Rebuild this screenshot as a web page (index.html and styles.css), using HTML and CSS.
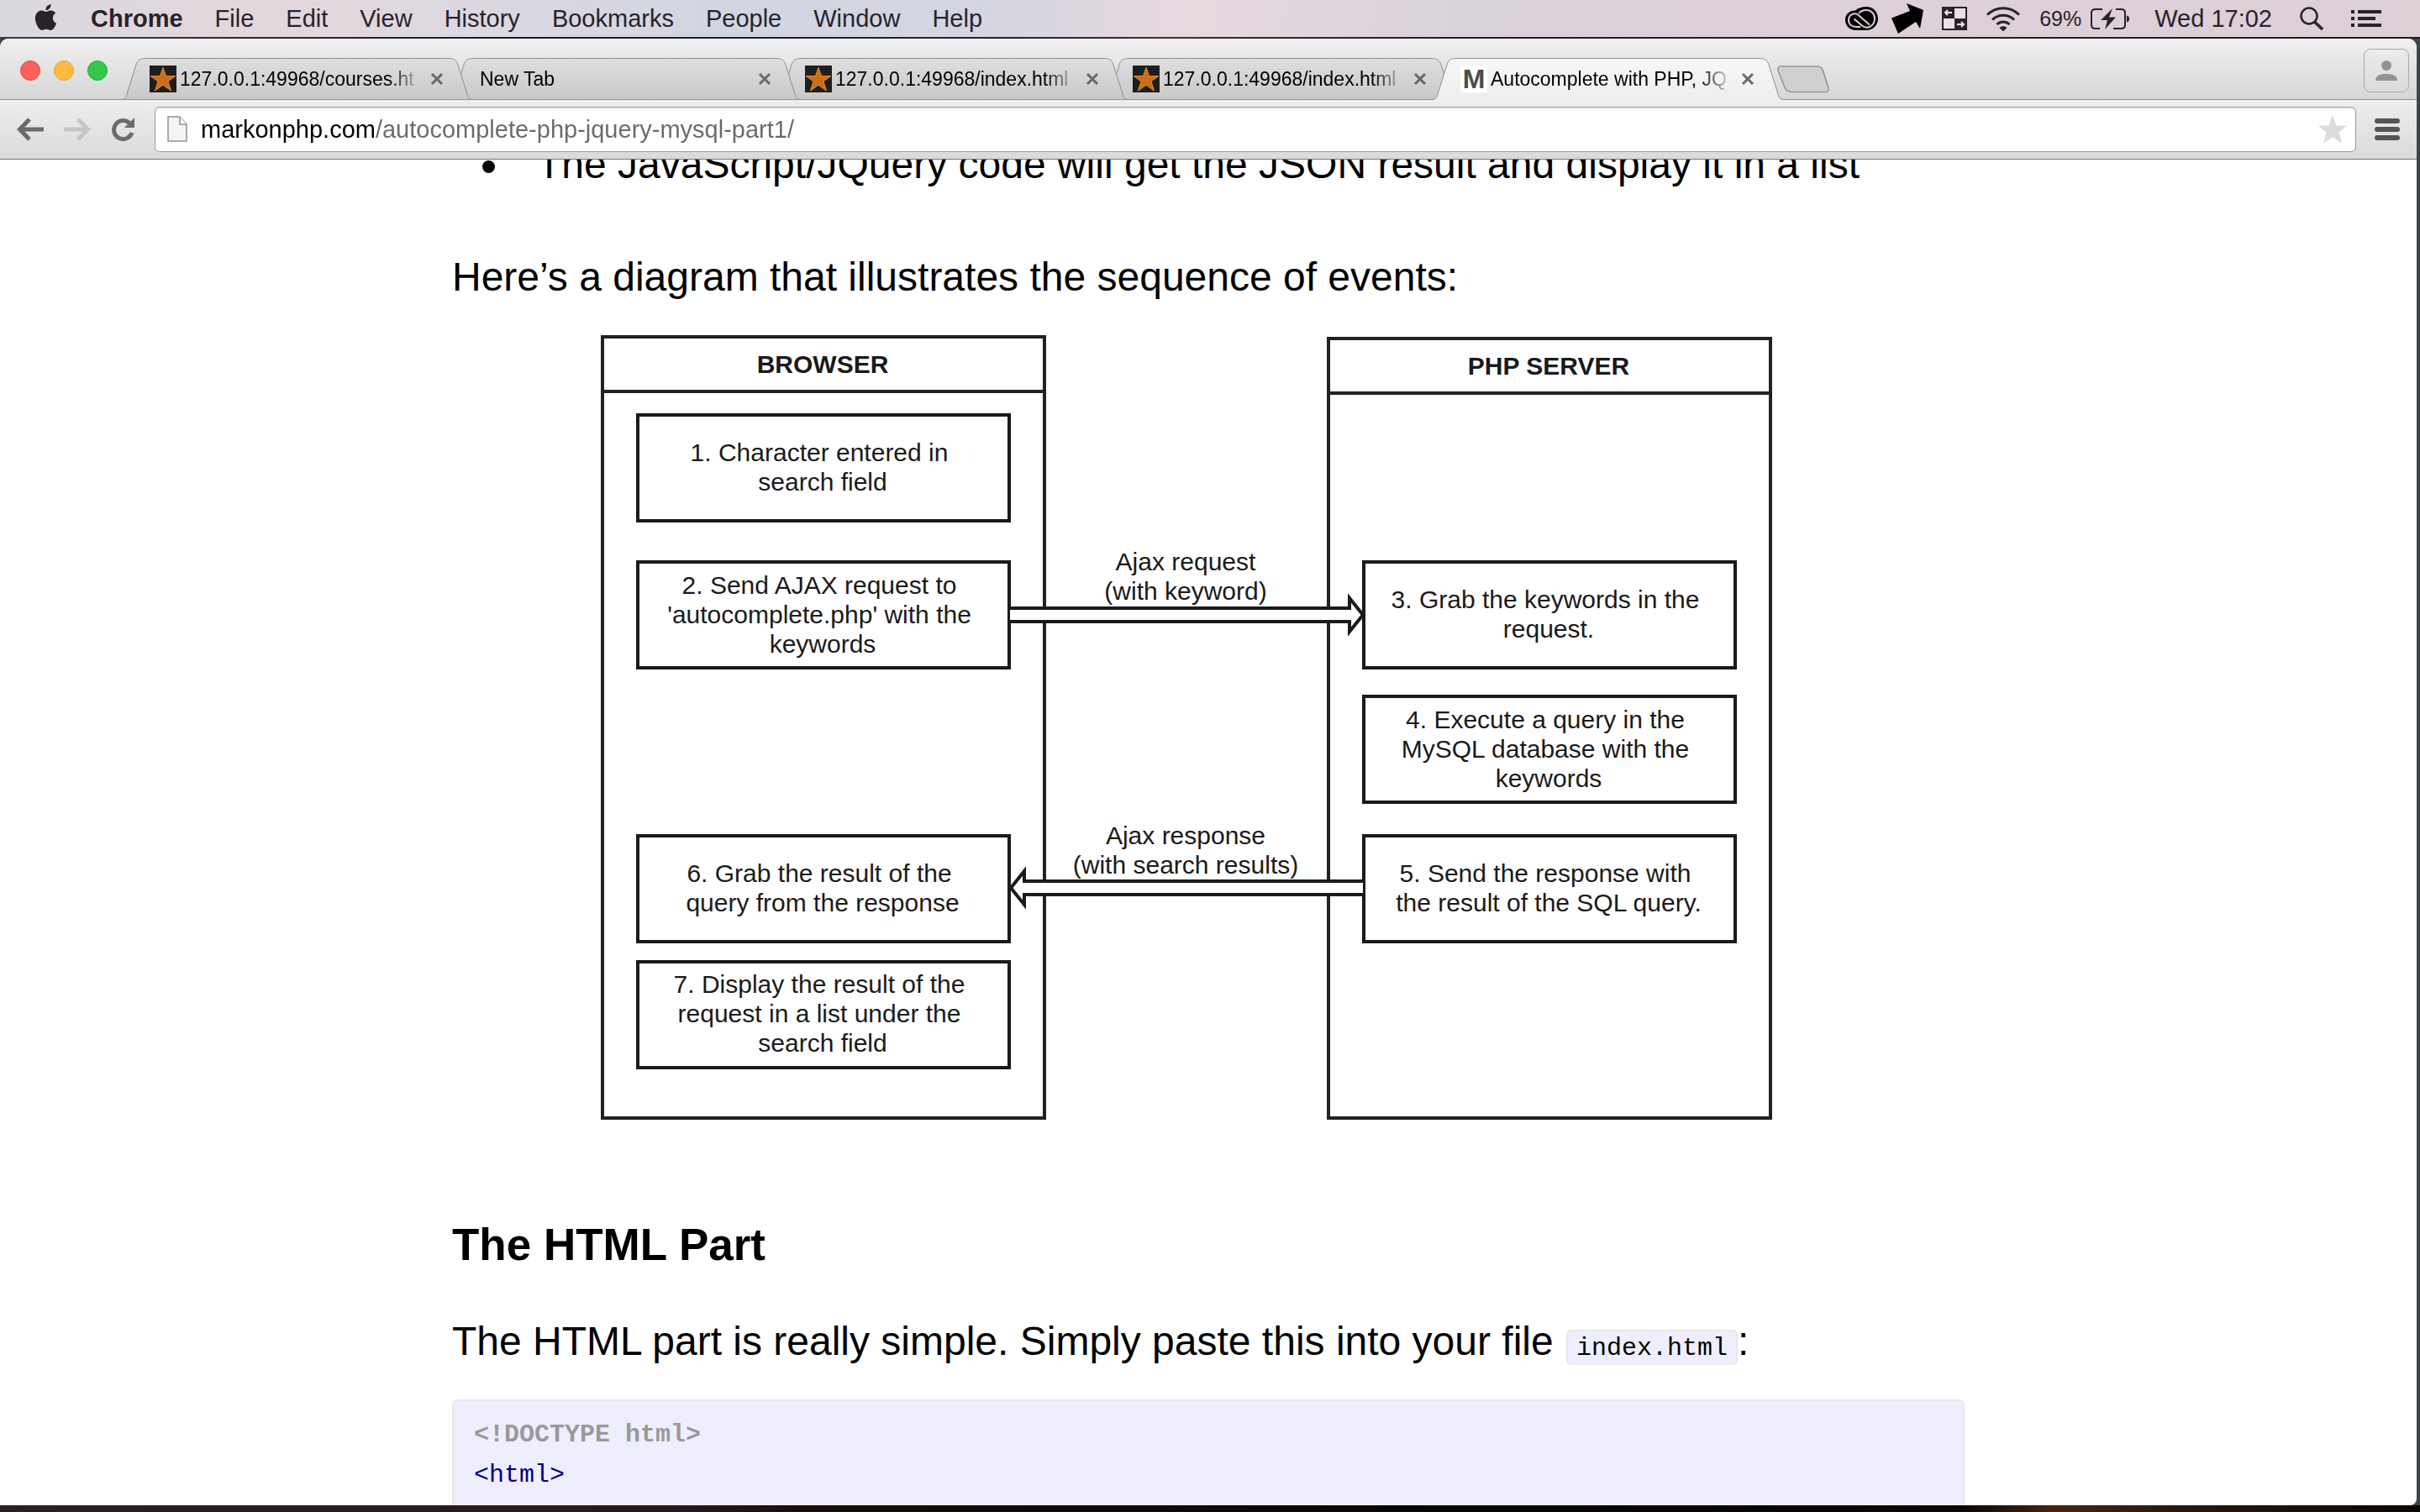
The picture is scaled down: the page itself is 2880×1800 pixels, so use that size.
FILE: index.html
```html
<!DOCTYPE html>
<html lang="en">
<head>
<meta charset="utf-8">
<title>Autocomplete with PHP, JQuery and MySQL</title>
<link rel="stylesheet" href="styles.css">
</head>
<body>
<svg class="defs" width="0" height="0" aria-hidden="true">
  <defs>
    <linearGradient id="tab-idle" x1="0" y1="0" x2="0" y2="1"><stop offset="0" stop-color="#dedede"/><stop offset="1" stop-color="#c9c9c9"/></linearGradient>
    <linearGradient id="tab-active" x1="0" y1="0" x2="0" y2="1"><stop offset="0" stop-color="#f7f7f7"/><stop offset="1" stop-color="#eeeeee"/></linearGradient>
    <symbol id="shape" viewBox="0 0 419 50"><path d="M1 49.500C5 49 6 47 7 43L18 8C20 2 23 .5 30 .5H389C396 .5 399 2 401 8L412 43C413 47 414 49 418 49.500Z" fill="url(#tab-idle)" stroke="#8f8f8f"/></symbol>
    <symbol id="shape-active" viewBox="0 0 419 50"><path d="M0 50C5 49 6 47 7 43L18 8C20 2 23 .5 30 .5H389C396 .5 399 2 401 8L412 43C413 47 414 49 419 50Z" fill="url(#tab-active)"/><path d="M0 49.500C5 49 6 47 7 43L18 8C20 2 23 .5 30 .5H389C396 .5 399 2 401 8L412 43C413 47 414 49 419 49.500" fill="none" stroke="#8f8f8f"/></symbol>
    <symbol id="favicon" viewBox="0 0 32 32"><path d="M0 0H32V32H0Z" fill="#1e1e1e"/><path d="M16 2.500L19.600 12.500H31L22 18.800L25.500 30L16 23.200L6.500 30L10 18.800L1 12.500H12.400Z" fill="#c96f1c" stroke="#e58a26" stroke-width="1"/></symbol>
    <symbol id="close" viewBox="0 0 16 16"><path d="M2 2L14 14M14 2L2 14" stroke="#686868" stroke-width="3" fill="none"/></symbol>
  </defs>
</svg>

<header class="menubar">
  <nav class="menus" aria-label="Menu bar">
    <button class="menu" aria-label="Apple menu"><svg class="apple" width="31" height="31" viewBox="0 0 24 24"><path fill="currentColor" d="M12.152 6.896c-.948 0-2.415-1.078-3.960-1.040-2.040.027-3.910 1.183-4.961 3.014-2.117 3.675-.546 9.103 1.519 12.090 1.013 1.454 2.208 3.090 3.792 3.039 1.520-.065 2.090-.987 3.935-.987 1.831 0 2.350.987 3.960.948 1.637-.026 2.676-1.480 3.676-2.948 1.156-1.688 1.636-3.325 1.662-3.415-.039-.013-3.182-1.221-3.220-4.857-.026-3.040 2.480-4.494 2.597-4.559-1.429-2.090-3.623-2.324-4.390-2.376-2-.156-3.675 1.090-4.610 1.090zM15.530 3.830c.843-1.012 1.400-2.427 1.245-3.830-1.207.052-2.662.805-3.532 1.818-.780.896-1.454 2.338-1.273 3.714 1.338.104 2.715-.688 3.559-1.701"/></svg></button>
    <button class="menu app-name">Chrome</button>
    <button class="menu">File</button>
    <button class="menu">Edit</button>
    <button class="menu">View</button>
    <button class="menu">History</button>
    <button class="menu">Bookmarks</button>
    <button class="menu">People</button>
    <button class="menu">Window</button>
    <button class="menu">Help</button>
  </nav>
  <div class="extras">
    <div class="status">
      <svg width="39" height="28" viewBox="0 0 39 28"><path d="M12 4.500C15 1.500 20 0 25 0C33 0 39 6 39 14C39 22 33 28 25 28H13C5 28 0 22.500 0 15.500C0 9 5 4.500 12 4.500Z" fill="#000"/><g fill="none" stroke="#ddd0d8" stroke-width="2"><path d="M29 21.500L15 9.500C11 6.500 4 9.500 4 15.500C4 21 8 24 13 24H18"/><path d="M10.500 14.500L20 22.500C27 28 35 22 35 14C35 8 30.500 4 25 4C21 4 18 5.500 16 8"/></g></svg>
      <svg width="38" height="36" viewBox="0 0 38 36"><path d="M0 17.500L22 9L18 0L38 8L34 30L29 22L8 36Z" fill="#000"/></svg>
    </div>
    <svg width="30" height="28" viewBox="0 0 30 28"><path d="M1 1H29V27H1Z" fill="#e9dfe6" stroke="currentColor" stroke-width="2"/><path d="M0 0H15V14H0ZM15 14H30V28H15Z" fill="currentColor"/><path d="M4 7H12M7 4L4 7L7 10M18 21H26M23 18L26 21L23 24" fill="none" stroke="#eee4ea" stroke-width="2"/></svg>
    <svg width="42" height="29" viewBox="0 0 42 29"><g fill="none" stroke="currentColor" stroke-width="3"><path d="M2 9.500C13-1 29-1 40 9.500"/><path d="M8 15.500C15 8.500 27 8.500 34 15.500"/><path d="M13.500 21C18 17 24 17 28.500 21"/></g><path d="M16.500 25C19 22.700 23 22.700 25.500 25L21 29.500Z" fill="currentColor"/></svg>
    <div class="battery">
      <span>69%</span>
      <svg width="46" height="25" viewBox="0 0 46 25"><path d="M14 1H6Q1 1 1 5V20Q1 24 6 24H11M27 24H36Q41 24 41 20V5Q41 1 36 1H30" fill="none" stroke="currentColor" stroke-width="2"/><path d="M43 8.500Q46 9 46 12.500T43 16.500Z" fill="currentColor"/><path d="M26 0L12 14H20L17 25L30 10.500H22Z" fill="currentColor"/></svg>
    </div>
    <div class="right-set">
      <time>Wed 17:02</time>
      <button class="menu" aria-label="Spotlight"><svg width="28" height="28" viewBox="0 0 28 28"><circle cx="11" cy="11" r="9.500" fill="none" stroke="currentColor" stroke-width="2.500"/><path d="M17.500 18L27 27" stroke="currentColor" stroke-width="3.500"/></svg></button>
      <button class="menu" aria-label="Notification Center"><svg width="36" height="20" viewBox="0 0 36 20"><path d="M0 2H4M8 2H36M0 10H4M8 10H29M0 18H4M8 18H36" stroke="currentColor" stroke-width="4"/></svg></button>
    </div>
  </div>
</header>

<div class="desktop">
  <div class="window">
    <div class="tabstrip">
      <div class="lights">
        <button class="light red" aria-label="Close window"></button>
        <button class="light yellow" aria-label="Minimise window"></button>
        <button class="light green" aria-label="Zoom window"></button>
      </div>
      <div class="tabs" role="tablist">
        <div class="tab t1" role="tab"><svg class="shape"><use href="#shape"/></svg><div class="tab-body"><svg class="fav"><use href="#favicon"/></svg><span class="title">127.0.0.1:49968/courses.ht</span><button class="close" aria-label="Close tab"><svg><use href="#close"/></svg></button></div></div>
        <div class="tab t2" role="tab"><svg class="shape"><use href="#shape"/></svg><div class="tab-body"><span class="title title-only">New Tab</span><button class="close" aria-label="Close tab"><svg><use href="#close"/></svg></button></div></div>
        <div class="tab t3" role="tab"><svg class="shape"><use href="#shape"/></svg><div class="tab-body"><svg class="fav"><use href="#favicon"/></svg><span class="title">127.0.0.1:49968/index.html</span><button class="close" aria-label="Close tab"><svg><use href="#close"/></svg></button></div></div>
        <div class="tab t4" role="tab"><svg class="shape"><use href="#shape"/></svg><div class="tab-body"><svg class="fav"><use href="#favicon"/></svg><span class="title">127.0.0.1:49968/index.html</span><button class="close" aria-label="Close tab"><svg><use href="#close"/></svg></button></div></div>
        <div class="tab active" role="tab" aria-selected="true"><svg class="shape"><use href="#shape-active"/></svg><div class="tab-body"><span class="fav mark">M</span><span class="title">Autocomplete with PHP, JQ</span><button class="close" aria-label="Close tab"><svg><use href="#close"/></svg></button></div></div>
      </div>
      <button class="new-tab" aria-label="New tab"><svg width="64" height="33" viewBox="0 0 64 33"><path d="M6 1H48Q54 1 55.500 6L62 27Q63 31.500 58 31.500H18Q12 31.500 10 26L2 6Q1 1 6 1Z" fill="#d0d0d0" stroke="#929292" stroke-width="1.500"/></svg></button>
      <button class="profile" aria-label="Profile"><svg width="26" height="24" viewBox="0 0 26 24"><circle cx="13" cy="6" r="6" fill="#929292"/><path d="M0 24C0 18 5 16 13 16S26 18 26 24Z" fill="#929292"/></svg></button>
    </div>

    <div class="toolbar">
      <div class="nav">
        <button class="tool" aria-label="Back"><svg width="32" height="28" viewBox="0 0 32 28"><path d="M15 2L3.500 14L15 26M4 14H32" fill="none" stroke="#6b6b6b" stroke-width="5"/></svg></button>
        <button class="tool" aria-label="Forward"><svg width="32" height="28" viewBox="0 0 32 28"><path d="M17 2L28.500 14L17 26M28 14H0" fill="none" stroke="#c6c6c6" stroke-width="5"/></svg></button>
        <button class="tool" aria-label="Reload"><svg width="30" height="28" viewBox="0 0 30 28"><path d="M23 7.500A11 11 0 1 0 25 18" fill="none" stroke="#6b6b6b" stroke-width="5"/><path d="M28 0V12H16Z" fill="#6b6b6b"/></svg></button>
      </div>
      <div class="omnibox">
        <svg width="24" height="32" viewBox="0 0 24 32"><path d="M1 1H15L23 10V30H1Z" fill="#f4f4f4" stroke="#919191" stroke-width="1.500"/><path d="M15 1V10H23" fill="#fff" stroke="#919191" stroke-width="1.500"/></svg>
        <input class="url" type="text" aria-label="Address" value="markonphp.com/autocomplete-php-jquery-mysql-part1/">
        <button class="tool" aria-label="Bookmark this page"><svg width="34" height="34" viewBox="0 0 34 34"><path d="M17 0L21.500 12.500H34L24.500 20.500L28 34L17 26L6 34L9.500 20.500L0 12.500H12.500Z" fill="#dcdcdc"/></svg></button>
      </div>
      <button class="tool" aria-label="Menu"><svg width="30" height="27" viewBox="0 0 30 27"><path d="M3 3H27M3 13H27M3 23H27" stroke="#555" stroke-width="6" stroke-linecap="round"/></svg></button>
    </div>

    <main class="page">
      <article class="post">
        <ul><li>The JavaScript/JQuery code will get the JSON result and display it in a list</li></ul>
        <p class="lead-in">Here’s a diagram that illustrates the sequence of events:</p>
        <figure>
          <svg class="diagram" viewBox="0 0 1500 936" role="img" aria-label="Sequence of events between the browser and the PHP server">
            <g fill="none" stroke="#222" stroke-width="4">
              <path d="M29 3H555V933H29ZM29 68H555"/>
              <path d="M893 5H1419V933H893ZM893 70H1419"/>
            </g>
            <g fill="#fff" stroke="#1a1a1a" stroke-width="4">
              <rect x="71" y="96" width="442" height="126"/>
              <rect x="71" y="271" width="442" height="126"/>
              <rect x="71" y="597" width="442" height="126"/>
              <rect x="71" y="747" width="442" height="126"/>
              <rect x="935" y="271" width="442" height="126"/>
              <rect x="935" y="431" width="442" height="126"/>
              <rect x="935" y="597" width="442" height="126"/>
              <path d="M514 326H918V314L934 334L918 354V342H514"/>
              <path d="M934 651H531V639L515 659L531 679V667H934"/>
            </g>
            <g class="caption heading"><text x="291" y="46">BROWSER</text><text x="1155" y="48">PHP SERVER</text></g>
            <g class="caption">
              <text x="287" y="151">1. Character entered in</text><text x="291" y="186">search field</text>
              <text x="287" y="309">2. Send AJAX request to</text><text x="287" y="344">'autocomplete.php' with the</text><text x="291" y="379">keywords</text>
              <text x="723" y="281">Ajax request</text><text x="723" y="316">(with keyword)</text>
              <text x="1151" y="326">3. Grab the keywords in the</text><text x="1155" y="361">request.</text>
              <text x="1151" y="469">4. Execute a query in the</text><text x="1151" y="504">MySQL database with the</text><text x="1155" y="539">keywords</text>
              <text x="723" y="607">Ajax response</text><text x="723" y="642">(with search results)</text>
              <text x="1151" y="652">5. Send the response with</text><text x="1155" y="687">the result of the SQL query.</text>
              <text x="287" y="652">6. Grab the result of the</text><text x="291" y="687">query from the response</text>
              <text x="287" y="784">7. Display the result of the</text><text x="287" y="819">request in a list under the</text><text x="291" y="854">search field</text>
            </g>
          </svg>
        </figure>
        <h2>The HTML Part</h2>
        <p>The HTML part is really simple. Simply paste this into your file <code>index.html</code>:</p>
        <pre><span class="doctype">&lt;!DOCTYPE html&gt;</span>
<span class="tag">&lt;html&gt;</span>
</pre>
      </article>
    </main>
  </div>
</div>
</body>
</html>
```
FILE: styles.css
```css
* { box-sizing: border-box; }

body {
  margin: 0;
  height: 100vh;
  display: flex;
  flex-direction: column;
  overflow: hidden;
  font-family: "Liberation Sans", Arial, sans-serif;
  color: #000;
}

button {
  margin: 0;
  padding: 0;
  border: 0;
  background: none;
  font: inherit;
  color: inherit;
}

svg { display: block; flex: none; }
.defs { position: absolute; }

/* Menu bar */
.menubar {
  flex: none;
  height: 44px;
  padding: 0 46px 0 39px;
  display: flex;
  align-items: center;
  justify-content: space-between;
  font-size: 29px;
  color: #29222b;
  background: linear-gradient(90deg, #dad8df 0%, #e3d7dc 12%, #dcd8e0 20%, #d2d6e2 29%, #d4d5e0 41%, #e7d8df 49%, #dad3db 60%, #ddd0da 70%, #dccfd6 100%);
}
.menus { display: flex; align-items: center; gap: 38px; }
.app-name { font-weight: bold; }
.apple { margin-bottom: 4px; }
.extras { display: flex; align-items: center; gap: 22px; }
.status { display: flex; align-items: center; gap: 16px; color: #000; }
.battery { display: flex; align-items: center; gap: 11px; font-size: 25px; }
.right-set { display: flex; align-items: center; gap: 33px; margin-left: 8px; }

/* Desktop and window */
.desktop {
  flex: 1;
  min-height: 0;
  padding: 2px 4px 8px 0;
  display: flex;
  background:
    linear-gradient(90deg, #2a1f24 0%, #241a1c 28%, #140e06 34%, #080602 60%, #0a0702 81%, #4a230f 85%, #2c1608 90%, #0c0803 100%) bottom / 100% 8px no-repeat,
    linear-gradient(90deg, #3a3946 0%, #1a1c2e 20%, #1a2038 40%, #4a2734 48%, #231a30 60%, #301726 80%, #1e1828 100%) top / 100% 2px no-repeat,
    #3c4646;
}
.window {
  flex: 1;
  min-width: 0;
  display: flex;
  flex-direction: column;
  overflow: hidden;
  border-radius: 10px 10px 8px 0;
  background: #fff;
}

/* Tab strip */
.tabstrip {
  flex: none;
  height: 73px;
  padding: 0 9px 0 24px;
  display: flex;
  align-items: flex-end;
  background: linear-gradient(#f0f0f0, #d6d6d6);
  box-shadow: inset 0 -1px #8f8f8f;
}
.lights { display: flex; gap: 16px; margin-bottom: 23px; }
.light { width: 24px; height: 24px; border-radius: 50%; border: 1px solid; }
.red { background: #fc605b; border-color: #df4844; }
.yellow { background: #fdbc40; border-color: #dea034; }
.green { background: #34c84a; border-color: #27aa35; }
.tabs { display: flex; margin-left: 16px; }
.tab {
  position: relative;
  width: 419px;
  height: 50px;
  margin-right: -29px;
  display: grid;
  font-size: 23px;
}
.tab > * { grid-area: 1 / 1; }
.t1 { z-index: 4; }
.t2 { z-index: 3; }
.t3 { z-index: 2; }
.t4 { z-index: 1; }
.active { z-index: 5; }
.shape { width: 419px; height: 50px; }
.tab-body {
  position: relative;
  display: flex;
  align-items: center;
  padding: 0 35px 0 34px;
  min-width: 0;
}
.fav { width: 32px; height: 32px; margin-right: 4px; flex: none; }
.mark {
  background: #fff;
  color: #4c4c4c;
  font-size: 32px;
  font-weight: bold;
  line-height: 32px;
  text-align: center;
}
.title {
  flex: 1;
  min-width: 0;
  overflow: hidden;
  white-space: nowrap;
  line-height: 32px;
  -webkit-mask-image: linear-gradient(90deg, #000 calc(100% - 40px), transparent);
  mask-image: linear-gradient(90deg, #000 calc(100% - 40px), transparent);
}
.title-only { margin-left: 3px; }
.close { margin-left: 10px; }
.close svg { width: 16px; height: 16px; }
.new-tab { margin: 0 0 8px 20px; z-index: 6; }
.profile {
  width: 54px;
  height: 52px;
  margin: 0 0 9px auto;
  display: grid;
  place-items: center;
  border: 1px solid #a9a9a9;
  border-radius: 8px;
}

/* Toolbar */
.toolbar {
  flex: none;
  height: 71px;
  padding: 0 20px;
  display: flex;
  align-items: center;
  gap: 22px;
  background: linear-gradient(#eeeeee, #dadada);
  border-bottom: 1px solid #777;
}
.nav { display: flex; gap: 24px; }
.omnibox {
  flex: 1;
  height: 54px;
  padding: 0 10px 0 14px;
  display: flex;
  align-items: center;
  border: 1px solid #9b9b9b;
  border-radius: 6px;
  background: #fff;
  box-shadow: inset 0 2px 2px #e8e8e8;
}
.url {
  flex: 1;
  min-width: 0;
  height: 44px;
  margin-left: 16px;
  padding: 0;
  border: 0;
  outline: 0;
  font: 29px "Liberation Sans", Arial, sans-serif;
  color: transparent;
  background: linear-gradient(90deg, #000 208px, #6a6a6a 208px);
  -webkit-background-clip: text;
  background-clip: text;
}

/* Article */
.page { flex: 1; min-height: 0; overflow: hidden; }
.post {
  max-width: 1800px;
  margin: -30px auto 0;
  font-size: 48px;
  line-height: 72px;
}
.post ul { margin: 0 0 62px; padding-left: 36px; list-style: none; }
.post li { display: flex; align-items: center; }
.post li::before {
  content: "";
  width: 15px;
  height: 15px;
  margin: 4px 50px 0 0;
  border-radius: 50%;
  background: #000;
}
.post p { margin: 0 0 33px; }
.post .lead-in { margin-bottom: 32px; }
figure { margin: 0 0 112px; }
.diagram { width: 1500px; max-width: 100%; margin: 0 auto; }
.caption { font-size: 30px; fill: #1a1a1a; text-anchor: middle; }
.heading { font-weight: bold; }
h2 { margin: 0 0 43px; font-size: 53px; line-height: 72px; }
code, pre {
  font-family: "Liberation Mono", "Courier New", monospace;
  font-size: 30px;
  border: 2px solid #e8e8e8;
  border-radius: 6px;
  background: #eeeeff;
}
code { margin-left: 2px; padding: 3px 10px 1px; line-height: 30px; }
pre { margin: 0; padding: 16px 24px 48px; line-height: 48px; }
.doctype { color: #999; font-weight: bold; }
.tag { color: #000080; }
```
